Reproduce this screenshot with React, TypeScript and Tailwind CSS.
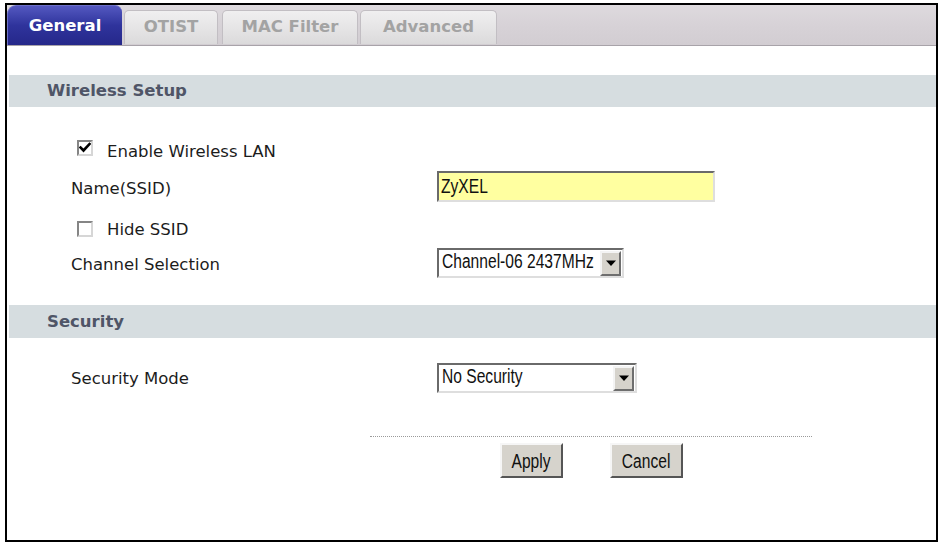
import React from "react";

function Tab({ label, w, ml, active }: { label: string; w: string; ml: string; active?: boolean }) {
  if (active) {
    return (
      <div
        className={`${w} ${ml} h-[40px] self-end rounded-tl-[9px] rounded-tr-[7px] bg-gradient-to-b from-[#5458c0] via-[#2f339c] to-[#25288a] flex items-center justify-center pt-[1px] text-white font-bold text-[16.5px] border-t border-l border-[#6d70c8]`}
      >
        {label}
      </div>
    );
  }
  return (
    <div
      className={`${w} ${ml} h-[34px] self-end mb-[1px] rounded-t-[5px] bg-gradient-to-b from-[#f0eff0] via-[#e6e5e6] to-[#dbdadb] border border-b-0 border-[#c2bec3] flex items-center justify-center text-[#a3a3a3] font-bold text-[16.5px]`}
    >
      {label}
    </div>
  );
}

function Checkbox({ checked }: { checked?: boolean }) {
  return (
    <span className="w-[16px] h-[16px] border-2 border-t-[#858585] border-l-[#858585] border-b-[#d6d6d6] border-r-[#d6d6d6] bg-white flex items-center justify-center shrink-0">
      {checked && (
        <svg width="12" height="12" viewBox="0 0 12 12">
          <path d="M1.5 5.5 L4.5 8.5 L10.5 2" stroke="#000" strokeWidth="2.6" fill="none" strokeLinecap="square" />
        </svg>
      )}
    </span>
  );
}

function FormText({ children, center }: { children: React.ReactNode; center?: boolean }) {
  return (
    <span
      className={`inline-block whitespace-nowrap font-['Liberation_Sans',Arial,sans-serif] text-[20px] leading-none text-[#111] scale-x-[0.78] ${center ? "origin-center" : "origin-left"}`}
    >
      {children}
    </span>
  );
}

function Select({ value, w }: { value: string; w: string }) {
  return (
    <div className={`${w} h-[30px] border-2 border-t-[#6a6a6a] border-l-[#6a6a6a] border-b-[#dedede] border-r-[#dedede] bg-white flex items-center pl-[3px] pr-[1px]`}>
      <div className="flex-1 overflow-hidden">
        <FormText>{value}</FormText>
      </div>
      <div className="w-[21px] h-[25px] bg-[#d6d3cc] border-2 border-t-[#f4f4f4] border-l-[#f4f4f4] border-b-[#6e6e6e] border-r-[#6e6e6e] flex items-center justify-center">
        <svg width="10" height="6" viewBox="0 0 10 6">
          <path d="M0 0.5 L10 0.5 L5 6 Z" fill="#000" />
        </svg>
      </div>
    </div>
  );
}

function Button({ label, w, ml }: { label: string; w: string; ml: string }) {
  return (
    <div className={`${w} ${ml} h-[35px] bg-[#d6d3cc] border-2 border-t-[#f6f6f6] border-l-[#f6f6f6] border-b-[#555] border-r-[#555] flex items-center justify-center`}>
      <FormText center>{label}</FormText>
    </div>
  );
}

function SectionHeader({ label, h }: { label: string; h: string }) {
  return (
    <div className={`${h} ml-[2px] bg-[#d6dde0] flex items-center pl-[38px] pt-[1px] text-[16.5px] font-bold text-[#4f5567]`}>
      {label}
    </div>
  );
}

export default function App() {
  return (
    <div className="w-[942px] h-[545px] bg-white pt-[3px] pl-[5px]">
      <div className="w-[933px] h-[539px] border-2 border-black flex flex-col font-['DejaVu_Sans',Verdana,sans-serif] text-[#1c1c1c] text-[16.5px] overflow-hidden">
        {/* Tab bar */}
        <div className="h-[41px] shrink-0 flex items-end bg-gradient-to-b from-[#dedade] via-[#d7d2d7] to-[#d2cdd2] border-b border-[#a8a3a9]">
          <Tab label="General" w="w-[115px]" ml="ml-0" active />
          <Tab label="OTIST" w="w-[94px]" ml="ml-[2px]" />
          <Tab label="MAC Filter" w="w-[136px]" ml="ml-[4px]" />
          <Tab label="Advanced" w="w-[137px]" ml="ml-[2px]" />
        </div>

        <div className="h-[29px] shrink-0" />
        <SectionHeader label="Wireless Setup" h="h-[32px]" />

        {/* Wireless rows */}
        <div className="mt-[23px] h-[36px] flex items-center pl-[70px] gap-[14px]">
          <Checkbox checked />
          <span className="pt-[9px]">Enable Wireless LAN</span>
        </div>
        <div className="h-[40px] flex items-center">
          <div className="w-[430px] pl-[64px] pt-[6px]">Name(SSID)</div>
          <div className="w-[278px] h-[31px] border-2 border-t-[#6a6a6a] border-l-[#6a6a6a] border-b-[#dedede] border-r-[#dedede] bg-[#ffffa0] flex items-center pl-[2px]">
            <FormText>ZyXEL</FormText>
          </div>
        </div>
        <div className="h-[42px] flex items-center pl-[70px] gap-[14px] pt-[4px]">
          <Checkbox />
          <span className="pt-[2px]">Hide SSID</span>
        </div>
        <div className="h-[30px] flex items-center">
          <div className="w-[430px] pl-[64px] pt-[5px]">Channel Selection</div>
          <Select value="Channel-06 2437MHz" w="w-[187px]" />
        </div>

        <div className="mt-[27px]">
          <SectionHeader label="Security" h="h-[33px]" />
        </div>

        <div className="mt-[25px] h-[30px] flex items-center">
          <div className="w-[430px] pl-[64px] pt-[2px]">Security Mode</div>
          <Select value="No Security" w="w-[200px]" />
        </div>

        <div className="mt-[43px] ml-[363px] w-[442px] border-t border-dotted border-[#9a9a9a]" />

        <div className="mt-[6px] flex">
          <Button label="Apply" w="w-[63px]" ml="ml-[493px]" />
          <Button label="Cancel" w="w-[73px]" ml="ml-[47px]" />
        </div>
      </div>
    </div>
  );
}
